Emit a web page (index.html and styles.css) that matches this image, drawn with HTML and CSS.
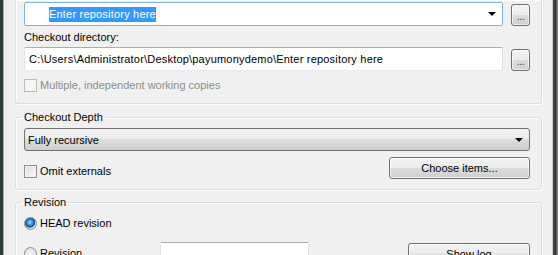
FILE: index.html
```html
<!DOCTYPE html>
<html lang="en">
<head>
  <meta charset="UTF-8">
  <title>Checkout</title>
  <link rel="stylesheet" href="styles.css">
</head>
<body>
  <div class="frame-left"></div>
  <div class="client">
    <fieldset class="group group-repo">
      <div class="row">
        <div class="combo combo-edit focused">
          <span class="combo-text"><span class="selected">Enter repository here</span></span>
          <span class="arrow"></span>
        </div>
        <button class="btn browse">...</button>
      </div>
      <label class="field-label">Checkout directory:</label>
      <div class="row">
        <div class="edit edit-dir">C:\Users\Administrator\Desktop\payumonydemo\Enter repository here</div>
        <button class="btn browse">...</button>
      </div>
      <label class="check disabled"><span class="box"></span>Multiple, independent working copies</label>
    </fieldset>

    <fieldset class="group group-depth">
      <legend>Checkout Depth</legend>
      <div class="combo combo-list">
        <span class="combo-text">Fully recursive</span>
        <span class="arrow"></span>
      </div>
      <div class="row row-omit">
        <label class="check omit"><span class="box"></span>Omit externals</label>
        <button class="btn btn-choose">Choose items...</button>
      </div>
    </fieldset>

    <fieldset class="group group-rev">
      <legend>Revision</legend>
      <label class="radio checked"><span class="dot"></span>HEAD revision</label>
      <div class="row row-rev">
        <label class="radio radio-rev"><span class="dot"></span>Revision</label>
        <div class="edit edit-rev"></div>
        <button class="btn btn-log">Show log</button>
      </div>
    </fieldset>
  </div>
  <div class="frame-right"></div>
</body>
</html>
```

FILE: styles.css
```css
* {
  box-sizing: border-box;
  margin: 0;
  padding: 0;
}

html, body {
  width: 558px;
  height: 255px;
  overflow: hidden;
}

body {
  display: flex;
  background: #f0f0f0;
  font-family: 'Liberation Sans', Arial, sans-serif;
  font-size: 11px;
  line-height: 14px;
  color: #000;
}

.frame-left {
  width: 4px;
  background: linear-gradient(to right, #2d3a3a 0 3px, #a9a9a9 3px);
}

.frame-right {
  width: 6px;
  background: linear-gradient(to right, #c8c8c8 0 1px, #4a4d52 1px, #2b2e33 4px, #8a8c90 5px);
}

.client {
  flex: 1;
  padding: 0 10px 0 11px;
}

/* group boxes */
.group {
  border: 1px solid #d5dfe5;
  border-radius: 3px;
  padding: 0 11px 10px 8px;
  min-width: 0;
  box-shadow: 1px 1px 0 #fff, inset 1px 1px 0 #fff;
}

.group legend {
  padding: 0 2px;
  margin-left: -2px;
  line-height: 14px;
}

.group-repo {
  border-top: none;
  border-radius: 0 0 3px 3px;
  padding-top: 2px;
  padding-bottom: 11px;
}

.group-depth {
  margin-top: 6px;
  padding-top: 4px;
}

.group-rev {
  margin-top: 5px;
  padding-top: 7px;
}

.row {
  display: flex;
  align-items: flex-start;
  gap: 8px;
}

.row-omit {
  margin-top: 6px;
}

/* text boxes */
.edit {
  background: #fff;
  border: 1px solid;
  border-color: #abadb3 #dbdfe6 #e3e9ef #e2e3ea;
  border-radius: 2px;
  height: 24px;
  padding: 4px 4px;
  white-space: nowrap;
  overflow: hidden;
  letter-spacing: 0.2px;
}

.edit-dir {
  flex: 1;
  margin-top: 3px;
}

.field-label {
  display: block;
  margin-top: 4px;
}

/* combo boxes */
.combo {
  position: relative;
  display: flex;
  align-items: center;
  height: 24px;
}

.combo-edit {
  flex: 1;
  background: #fff;
  border: 1px solid #7eb4ea;
  border-radius: 2px;
  padding-left: 24px;
  letter-spacing: 0.2px;
}

.selected {
  background: #3399ff;
  color: #fff;
  padding: 1px 0 2px;
}

.combo-list {
  height: 23px;
  border: 1px solid #707070;
  border-radius: 3px;
  background: linear-gradient(#f2f2f2 0, #ebebeb 50%, #dddddd 50%, #cfcfcf 100%);
  padding-left: 3px;
}

.arrow {
  position: absolute;
  right: 6px;
  top: 9px;
  width: 0;
  height: 0;
  border-left: 4px solid transparent;
  border-right: 4px solid transparent;
  border-top: 4px solid #000;
}

/* push buttons */
.btn {
  font: inherit;
  color: #000;
  border: 1px solid #707070;
  border-radius: 3px;
  background: linear-gradient(#f2f2f2 0, #ebebeb 50%, #dddddd 50%, #cfcfcf 100%);
  height: 22px;
  box-shadow: inset 0 0 0 1px rgba(255, 255, 255, 0.7);
}

.browse {
  width: 19px;
  margin-top: 2px;
  padding: 0;
  line-height: 22px;
  color: #4a4a6a;
  letter-spacing: -0.5px;
  text-align: center;
}

.edit-dir + .browse {
  margin-top: 5px;
}

.btn-choose {
  width: 141px;
  margin-left: auto;
}

.btn-log {
  width: 122px;
  margin-left: auto;
  margin-top: 1px;
}

/* check boxes and radios */
.check, .radio {
  display: flex;
  align-items: center;
  gap: 3px;
  height: 14px;
}

.check.disabled {
  margin-top: 7px;
  color: #8d8d8d;
}

.check.omit {
  margin-top: 7px;
}

.box {
  width: 13px;
  height: 13px;
  border: 1px solid #8e8f8f;
  background: linear-gradient(135deg, #dcdcdc, #fbfbfb);
  box-shadow: inset 0 0 0 1px #f4f4f4;
}

.disabled .box {
  border-color: #bcbcbc;
  background: #f4f4f4;
}

.dot {
  width: 13px;
  height: 13px;
  border-radius: 50%;
  border: 1px solid #8e8f8f;
  background: radial-gradient(circle at 50% 50%, #f6f6f6 0, #d4d4d4 100%);
}

.checked .dot {
  background: radial-gradient(circle at 45% 40%, #8fe0ff 0, #1d8bd0 35%, #0b4e86 55%, #dcdcdc 62%, #f4f4f4 100%);
}

.row-rev {
  margin-top: 12px;
  gap: 0;
}

.radio-rev {
  width: 136px;
  margin-top: 4px;
}

.edit-rev {
  width: 149px;
}
```
